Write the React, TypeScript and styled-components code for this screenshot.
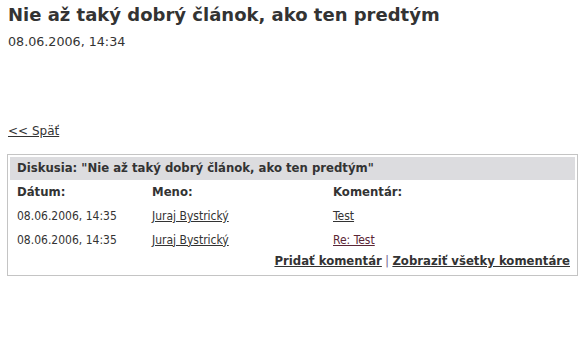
import React from 'react';
import styled, { createGlobalStyle } from 'styled-components';

const GlobalStyle = createGlobalStyle`
    html, body {
        margin: 0;
        padding: 0;
        background: #ffffff;
    }
    body {
        font-family: 'DejaVu Sans', Verdana, sans-serif;
        color: #333333;
    }
`;

const Page = styled.div`
    padding: 3px 8px 0 8px;
`;

const Title = styled.h1`
    margin: 0;
    font-size: 18px;
    line-height: 24px;
    font-weight: bold;
    color: #333333;
`;

const Datum = styled.div`
    margin-top: 7px;
    font-size: 12.7px;
    line-height: 16px;
`;

const Link = styled.a<{ $bold?: boolean; $visited?: boolean }>`
    color: ${(p) => (p.$visited ? '#5a2636' : '#333333')};
    text-decoration: underline;
    font-weight: ${(p) => (p.$bold ? 'bold' : 'normal')};
    cursor: pointer;
`;

const Spat = styled.div`
    margin-top: 73px;
    font-size: 12px;
    line-height: 16px;
`;

const Diskusia = styled.div`
    margin: 15px -1px 0 -1px;
    border: 1px solid #c4c4c4;
    padding: 2px 2px 4px 2px;
    font-family: 'DejaVu Sans Condensed', 'DejaVu Sans', sans-serif;
    font-stretch: semi-condensed;
    font-size: 12px;
`;

const Tucne = `
    font-family: 'DejaVu Sans', Verdana, sans-serif;
    font-stretch: normal;
    font-size: 11.7px;
    font-weight: bold;
`;

const Hlavicka = styled.div`
    ${Tucne}
    background: #dcdcdf;
    padding-left: 7px;
    line-height: 23px;
`;

const Tabulka = styled.div`
    display: grid;
    grid-template-columns: 135px 181px 1fr;
    padding-left: 7px;
`;

const Bunka = styled.div`
    line-height: 23.5px;
`;

const HlavickaBunka = styled.div`
    ${Tucne}
    line-height: 25px;
`;

const Paticka = styled.div`
    text-align: right;
    padding-right: 5px;
    line-height: 19px;

    a {
        ${Tucne}
    }
`;

const Oddelovac = styled.span`
    color: #6b5a8a;
`;

const komentare = [
    { datum: '08.06.2006, 14:35', meno: 'Juraj Bystrický', text: 'Test', navstivene: false },
    { datum: '08.06.2006, 14:35', meno: 'Juraj Bystrický', text: 'Re: Test', navstivene: true },
];

const App: React.FC = () => {
    return (
        <Page>
            <GlobalStyle />
            <Title>Nie až taký dobrý článok, ako ten predtým</Title>
            <Datum>08.06.2006, 14:34</Datum>
            <Spat>
                <Link>&lt;&lt; Späť</Link>
            </Spat>
            <Diskusia>
                <Hlavicka>Diskusia: "Nie až taký dobrý článok, ako ten predtým"</Hlavicka>
                <Tabulka>
                    <HlavickaBunka>Dátum:</HlavickaBunka>
                    <HlavickaBunka>Meno:</HlavickaBunka>
                    <HlavickaBunka>Komentár:</HlavickaBunka>
                    {komentare.map((k, i) => (
                        <React.Fragment key={i}>
                            <Bunka>{k.datum}</Bunka>
                            <Bunka>
                                <Link>{k.meno}</Link>
                            </Bunka>
                            <Bunka>
                                <Link $visited={k.navstivene}>{k.text}</Link>
                            </Bunka>
                        </React.Fragment>
                    ))}
                </Tabulka>
                <Paticka>
                    <Link $bold>Pridať komentár</Link> <Oddelovac>|</Oddelovac>{' '}
                    <Link $bold>Zobraziť všetky komentáre</Link>
                </Paticka>
            </Diskusia>
        </Page>
    );
};

export default App;
